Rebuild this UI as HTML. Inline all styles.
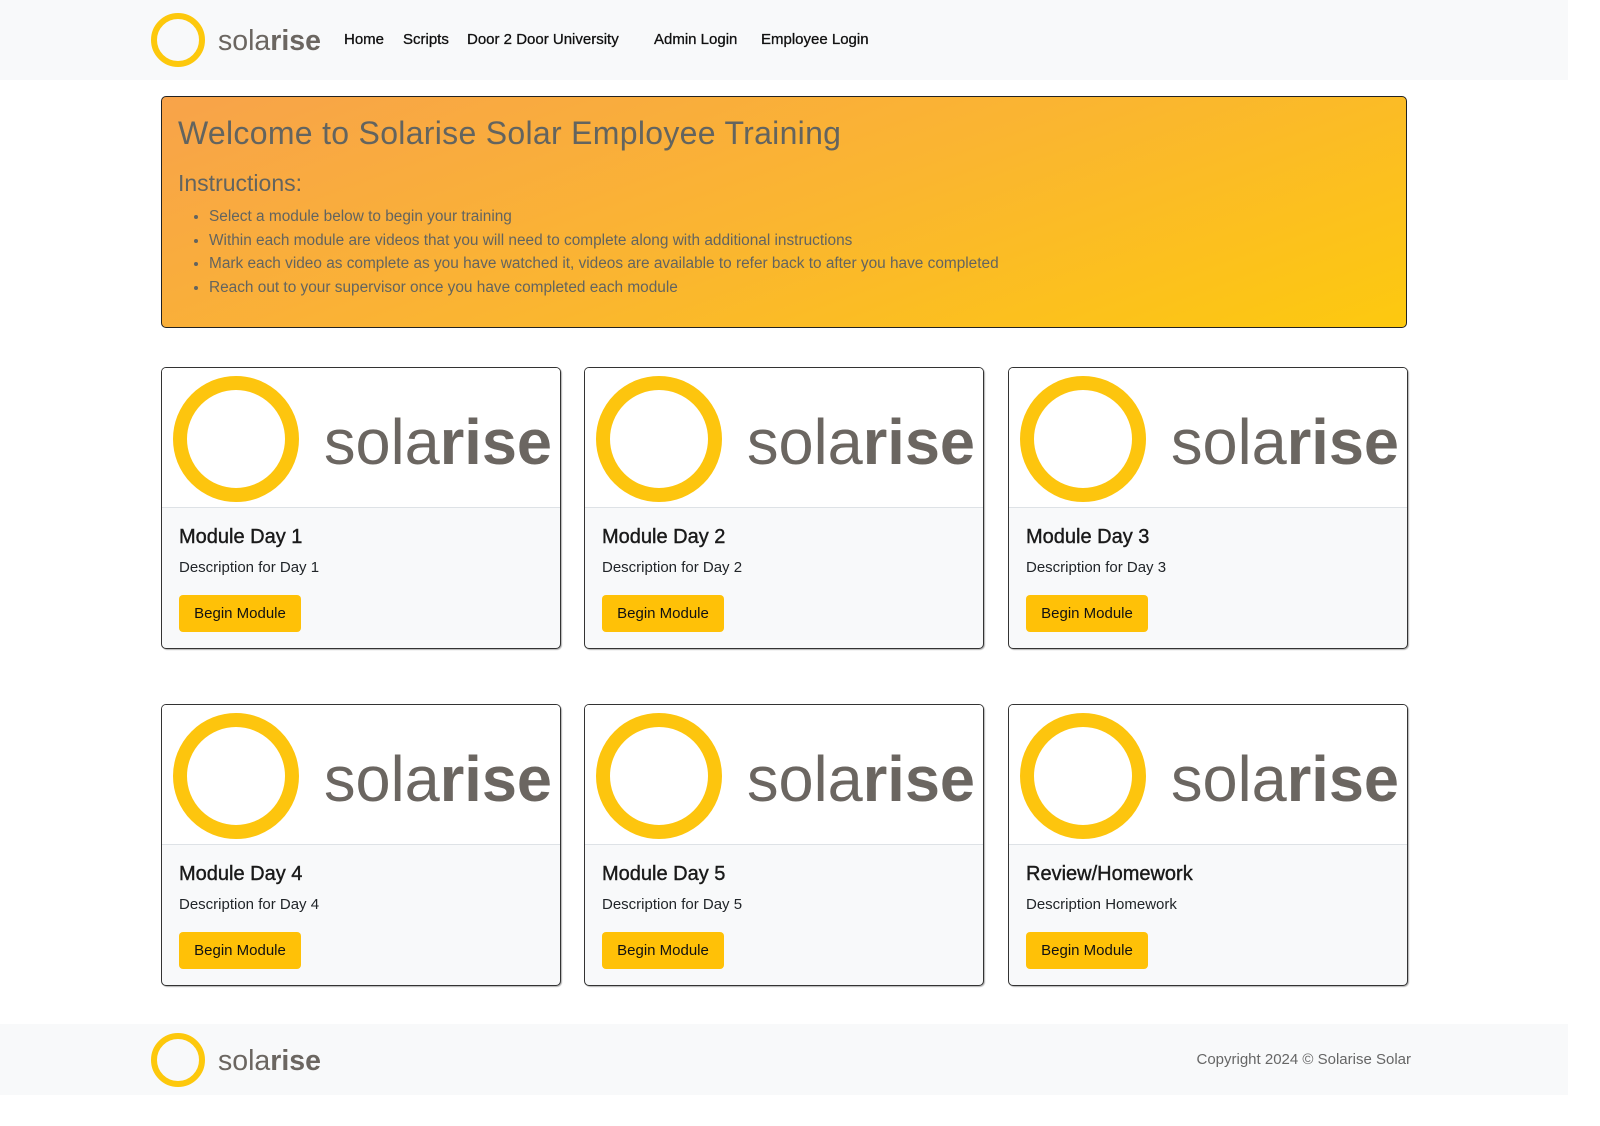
<!DOCTYPE html>
<html><head><meta charset="utf-8"><style>
*{box-sizing:border-box;margin:0;padding:0}
body{width:1600px;height:1126px;background:#fff;font-family:"Liberation Sans",sans-serif;color:#212529;position:relative;overflow:hidden}
.nav{position:absolute;left:0;top:0;width:1568px;height:80px;background:#f8f9fa}
.logo{position:absolute;display:block}
.nav a{position:absolute;top:31px;font-size:15px;color:#111;text-decoration:none;white-space:nowrap;-webkit-text-stroke:0.3px #111}
.banner{position:absolute;left:161px;top:96px;width:1246px;height:232px;border:1px solid #222;border-radius:5px;background:linear-gradient(160deg,#f8a34a 0%,#fab531 50%,#fdc90f 100%);color:#63645f;padding:0 16px}
.banner h1{font-size:32px;font-weight:normal;margin-top:18px;letter-spacing:0.3px}
.banner h2{font-size:23px;font-weight:normal;margin-top:18px}
.banner ul{margin-top:8px;padding-left:31px;font-size:15.4px;line-height:23.5px}
.card{position:absolute;width:400px;height:282px;border:1px solid #333;border-radius:5px;overflow:hidden;background:#f8f9fa;box-shadow:1px 1px 1px rgba(0,0,0,.3)}
.card .img{height:140px;background:#fff;border-bottom:1px solid #dee2e6;position:relative}
.card h3{position:absolute;left:17px;top:158px;font-size:20px;font-weight:normal;color:#1a1a1a;-webkit-text-stroke:0.4px #1a1a1a}
.card p{position:absolute;left:17px;top:191px;font-size:15px}
.card .btn{position:absolute;left:17px;top:227px;width:122px;height:37px;background:#ffc107;border-radius:4px;font-size:15px;line-height:37px;text-align:center;color:#111}
.footer{position:absolute;left:0;top:1024px;width:1568px;height:71px;background:#f8f9fa}
.copy{position:absolute;right:157px;top:27px;font-size:15px;color:#666}
</style></head><body>
<div class="nav">
<svg class="logo" style="left:148px;top:12px" width="180" height="58" viewBox="0 0 180 58"><circle cx="30" cy="28" r="24" fill="none" stroke="#fdc80c" stroke-width="6"/><text x="70" y="38" font-family="Liberation Sans" font-size="29" fill="#6b6661" textLength="103" lengthAdjust="spacingAndGlyphs">sola<tspan font-weight="bold">rise</tspan></text></svg>
<a style="left:344px">Home</a><a style="left:403px">Scripts</a><a style="left:467px">Door 2 Door University</a><a style="left:654px">Admin Login</a><a style="left:761px">Employee Login</a>
</div>
<div class="banner"><h1>Welcome to Solarise Solar Employee Training</h1><h2>Instructions:</h2><ul>
<li>Select a module below to begin your training</li>
<li>Within each module are videos that you will need to complete along with additional instructions</li>
<li>Mark each video as complete as you have watched it, videos are available to refer back to after you have completed</li>
<li>Reach out to your supervisor once you have completed each module</li></ul></div>

<div class="card" style="left:161px;top:367px"><div class="img"><svg width="400" height="140"><circle cx="74" cy="71" r="56" fill="none" stroke="#fdc50e" stroke-width="14"/><text x="162" y="96" font-family="Liberation Sans" font-size="64" fill="#6b6661" textLength="228" lengthAdjust="spacingAndGlyphs">sola<tspan font-weight="bold">rise</tspan></text></svg></div><h3>Module Day 1</h3><p>Description for Day 1</p><div class="btn">Begin Module</div></div>
<div class="card" style="left:584px;top:367px"><div class="img"><svg width="400" height="140"><circle cx="74" cy="71" r="56" fill="none" stroke="#fdc50e" stroke-width="14"/><text x="162" y="96" font-family="Liberation Sans" font-size="64" fill="#6b6661" textLength="228" lengthAdjust="spacingAndGlyphs">sola<tspan font-weight="bold">rise</tspan></text></svg></div><h3>Module Day 2</h3><p>Description for Day 2</p><div class="btn">Begin Module</div></div>
<div class="card" style="left:1008px;top:367px"><div class="img"><svg width="400" height="140"><circle cx="74" cy="71" r="56" fill="none" stroke="#fdc50e" stroke-width="14"/><text x="162" y="96" font-family="Liberation Sans" font-size="64" fill="#6b6661" textLength="228" lengthAdjust="spacingAndGlyphs">sola<tspan font-weight="bold">rise</tspan></text></svg></div><h3>Module Day 3</h3><p>Description for Day 3</p><div class="btn">Begin Module</div></div>
<div class="card" style="left:161px;top:704px"><div class="img"><svg width="400" height="140"><circle cx="74" cy="71" r="56" fill="none" stroke="#fdc50e" stroke-width="14"/><text x="162" y="96" font-family="Liberation Sans" font-size="64" fill="#6b6661" textLength="228" lengthAdjust="spacingAndGlyphs">sola<tspan font-weight="bold">rise</tspan></text></svg></div><h3>Module Day 4</h3><p>Description for Day 4</p><div class="btn">Begin Module</div></div>
<div class="card" style="left:584px;top:704px"><div class="img"><svg width="400" height="140"><circle cx="74" cy="71" r="56" fill="none" stroke="#fdc50e" stroke-width="14"/><text x="162" y="96" font-family="Liberation Sans" font-size="64" fill="#6b6661" textLength="228" lengthAdjust="spacingAndGlyphs">sola<tspan font-weight="bold">rise</tspan></text></svg></div><h3>Module Day 5</h3><p>Description for Day 5</p><div class="btn">Begin Module</div></div>
<div class="card" style="left:1008px;top:704px"><div class="img"><svg width="400" height="140"><circle cx="74" cy="71" r="56" fill="none" stroke="#fdc50e" stroke-width="14"/><text x="162" y="96" font-family="Liberation Sans" font-size="64" fill="#6b6661" textLength="228" lengthAdjust="spacingAndGlyphs">sola<tspan font-weight="bold">rise</tspan></text></svg></div><h3>Review/Homework</h3><p>Description Homework</p><div class="btn">Begin Module</div></div>

<div class="footer">
<svg class="logo" style="left:148px;top:7px" width="180" height="58" viewBox="0 0 180 58"><circle cx="30" cy="29" r="24" fill="none" stroke="#fdc80c" stroke-width="6"/><text x="70" y="39" font-family="Liberation Sans" font-size="29" fill="#6b6661" textLength="103" lengthAdjust="spacingAndGlyphs">sola<tspan font-weight="bold">rise</tspan></text></svg>
<div class="copy">Copyright 2024 © Solarise Solar</div>
</div>
</body></html>
